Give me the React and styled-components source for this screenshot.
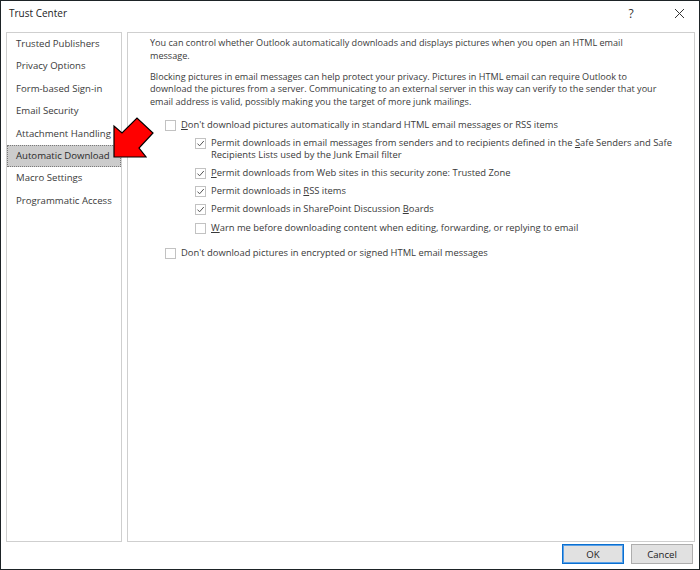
import React from "react";
import styled, { createGlobalStyle } from "styled-components";

const GlobalStyle = createGlobalStyle`
  html, body {
    margin: 0;
    padding: 0;
    background: #fff;
  }
  * {
    box-sizing: border-box;
  }
`;

const navItems = [
  "Trusted Publishers",
  "Privacy Options",
  "Form-based Sign-in",
  "Email Security",
  "Attachment Handling",
  "Automatic Download",
  "Macro Settings",
  "Programmatic Access",
];

function App() {
  return (
    <>
      <GlobalStyle />
      <Dialog>
        <TitleBar>
          <Title>Trust Center</Title>
          <TitleButton>?</TitleButton>
          <TitleButton close>
            <svg width="11" height="11" viewBox="0 0 11 11">
              <path d="M1 1 L10 10 M10 1 L1 10" stroke="#333" strokeWidth="1" />
            </svg>
          </TitleButton>
        </TitleBar>

        <Body>
          <NavPanel>
            {navItems.map((item) => (
              <NavItem key={item} selected={item === "Automatic Download"}>
                {item}
              </NavItem>
            ))}
            <Arrow width="48" height="48" viewBox="0 0 48 48">
              <polygon
                points="2,41 2,10 10,17 25,2 41,17 27,32 34,41"
                fill="#ff0000"
                stroke="#000"
                strokeWidth="1.2"
                strokeLinejoin="miter"
              />
            </Arrow>
          </NavPanel>

          <ContentPanel>
            <Para>
              You can control whether Outlook automatically downloads and displays pictures when you open an HTML email
              <br />
              message.
            </Para>
            <Para>
              Blocking pictures in email messages can help protect your privacy. Pictures in HTML email can require Outlook to
              <br />
              download the pictures from a server. Communicating to an external server in this way can verify to the sender that your
              <br />
              email address is valid, possibly making you the target of more junk mailings.
            </Para>

            <Options>
              <Option>
                <Box />
                <Label>
                  <u>D</u>on't download pictures automatically in standard HTML email messages or RSS items
                </Label>
              </Option>
              <Option indent>
                <Box checked />
                <Label>
                  Permit downloads in email messages from senders and to recipients defined in the <u>S</u>afe Senders and Safe
                  <br />
                  Recipients Lists used by the Junk Email filter
                </Label>
              </Option>
              <Option indent>
                <Box checked />
                <Label>
                  <u>P</u>ermit downloads from Web sites in this security zone: Trusted Zone
                </Label>
              </Option>
              <Option indent>
                <Box checked />
                <Label>
                  Permit downloads in <u>R</u>SS items
                </Label>
              </Option>
              <Option indent>
                <Box checked />
                <Label>
                  Permit downloads in SharePoint Discussion <u>B</u>oards
                </Label>
              </Option>
              <Option indent>
                <Box />
                <Label>
                  <u>W</u>arn me before downloading content when editing, forwarding, or replying to email
                </Label>
              </Option>
              <Option gap>
                <Box />
                <Label>Don't download pictures in encrypted or signed HTML email messages</Label>
              </Option>
            </Options>
          </ContentPanel>
        </Body>

        <Footer>
          <Button primary>OK</Button>
          <Button>Cancel</Button>
        </Footer>
      </Dialog>
    </>
  );
}

const CheckMark = () => (
  <svg width="9" height="9" viewBox="0 0 9 9">
    <path d="M1.5 4.6 L3.6 6.8 L7.8 2" fill="none" stroke="#555" strokeWidth="1" />
  </svg>
);

const Box = ({ checked }) => <BoxFrame>{checked && <CheckMark />}</BoxFrame>;

const Dialog = styled.div`
  width: 700px;
  height: 570px;
  border: 1px solid #1d2326;
  background: #fff;
  display: flex;
  flex-direction: column;
  font-family: "Open Sans", "Noto Sans", sans-serif;
  font-size: 9.4px;
  color: #3a3a3a;
`;

const TitleBar = styled.div`
  height: 26px;
  display: flex;
  align-items: center;
  padding: 0 0 2px 8px;
`;

const Title = styled.div`
  flex: 1;
  font-size: 10px;
  color: #222;
`;

const TitleButton = styled.div`
  width: ${(p) => (p.close ? "40px" : "56px")};
  height: 24px;
  display: flex;
  align-items: center;
  justify-content: center;
  font-size: 12px;
  color: #333;
`;

const Body = styled.div`
  flex: 1;
  display: flex;
  gap: 5px;
  padding: 5px 4px 0 5px;
  min-height: 0;
`;

const NavPanel = styled.div`
  position: relative;
  width: 116px;
  flex-shrink: 0;
  border: 1px solid #cfcfcf;
  padding-top: 0;
  display: flex;
  flex-direction: column;
`;

const NavItem = styled.div`
  height: 22.4px;
  line-height: 20.4px;
  padding-left: 8px;
  font-size: 9.6px;
  white-space: nowrap;
  overflow: hidden;
  background: ${(p) => (p.selected ? "#cccccc" : "transparent")};
  border: 1px dotted ${(p) => (p.selected ? "#7a7a7a" : "transparent")};
  color: ${(p) => (p.selected ? "#2a2a2a" : "#3a3a3a")};
`;

const Arrow = styled.svg`
  position: absolute;
  left: 105px;
  top: 83px;
`;

const ContentPanel = styled.div`
  flex: 1;
  min-width: 0;
  overflow: hidden;
  border: 1px solid #cfcfcf;
  padding: 4px 0 0 22px;
`;

const Para = styled.p`
  margin: 0 0 8.5px;
  font-size: 9.1px;
  line-height: 12.5px;
  white-space: nowrap;
`;

const Options = styled.div`
  display: flex;
  flex-direction: column;
  padding-top: 2px;
`;

const Option = styled.div`
  display: flex;
  align-items: flex-start;
  gap: 5px;
  padding-left: ${(p) => (p.indent ? "45px" : "15px")};
  margin-top: ${(p) => (p.gap ? "7px" : "0")};
  min-height: 18.3px;
`;

const BoxFrame = styled.div`
  width: 11px;
  height: 11px;
  margin-top: 1px;
  border: 1px solid #c2c2c2;
  background: #fff;
  display: flex;
  align-items: center;
  justify-content: center;
  flex-shrink: 0;
`;

const Label = styled.div`
  line-height: 12.5px;
  white-space: nowrap;
  padding-bottom: 5px;
`;

const Footer = styled.div`
  height: 27px;
  display: flex;
  justify-content: flex-end;
  gap: 7px;
  padding: 2px 6px 0 0;
`;

const Button = styled.button`
  width: 62px;
  height: 20px;
  font-family: inherit;
  font-size: 9.6px;
  color: #222;
  background: #e1e1e1;
  border: 1px solid ${(p) => (p.primary ? "#0a6fd0" : "#adadad")};
  box-shadow: ${(p) => (p.primary ? "inset 0 0 0 1px #5aa0e6" : "none")};
  padding: 0;
`;

export default App;
